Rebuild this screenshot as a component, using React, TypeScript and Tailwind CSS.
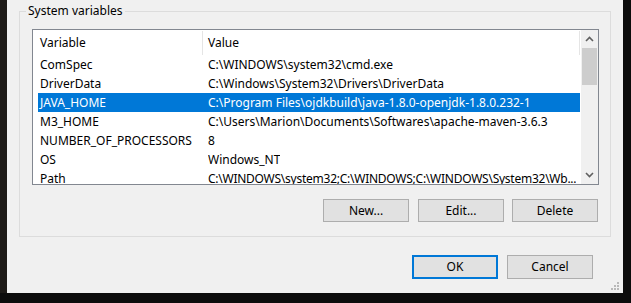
import React from "react";

const rows: [string, string][] = [
  ["ComSpec", "C:\\WINDOWS\\system32\\cmd.exe"],
  ["DriverData", "C:\\Windows\\System32\\Drivers\\DriverData"],
  ["JAVA_HOME", "C:\\Program Files\\ojdkbuild\\java-1.8.0-openjdk-1.8.0.232-1"],
  ["M3_HOME", "C:\\Users\\Marion\\Documents\\Softwares\\apache-maven-3.6.3"],
  ["NUMBER_OF_PROCESSORS", "8"],
  ["OS", "Windows_NT"],
  ["Path", "C:\\WINDOWS\\system32;C:\\WINDOWS;C:\\WINDOWS\\System32\\Wb..."],
];

function Btn({ label, primary, cls }: { label: string; primary?: boolean; cls?: string }) {
  return (
    <div
      className={
        "w-[86px] h-[23px] flex items-center justify-center bg-[#e1e1e1] text-[12px] text-black " +
        (primary ? "border-2 border-[#0078d7] " : "border border-[#adadad] ") +
        (cls ?? "")
      }
    >
      {label}
    </div>
  );
}

export default function App() {
  return (
    <div
      className="w-[631px] h-[303px] bg-[#0c0c0c] flex overflow-hidden"
      style={{ fontFamily: '"Segoe UI", "Noto Sans", sans-serif' }}
    >
      <div className="w-[7px] h-[293px] bg-[#1d1a17]" />
      <div className="w-[616px] h-[293px] bg-[#f0f0f0] flex flex-col relative">
        {/* group box */}
        <div className="mt-[11px] ml-[12px] w-[592px] h-[226px] border border-[#dcdcdc] relative flex flex-col">
          <span className="absolute left-[6px] top-[-9px] px-[2px] bg-[#f0f0f0] text-[12px] leading-[16px] text-black">
            System variables
          </span>
          <div className="mt-[17px] ml-[12px] w-[567px] h-[156px] border border-[#828790] bg-white flex overflow-hidden">
            <div className="w-[548px] flex flex-col overflow-hidden">
              <div className="h-[25px] flex shrink-0 text-[12px] text-black">
                <div className="w-[169px] shrink-0 pl-[7px] flex items-center">Variable</div>
                <div className="w-px shrink-0 mt-px h-[24px] bg-[#e5e5e5]" />
                <div className="w-[376px] shrink-0 pl-[5px] flex items-center">Value</div>
                <div className="w-px shrink-0 mt-px h-[24px] bg-[#e5e5e5]" />
              </div>
              {rows.map(([k, v]) => {
                const sel = k === "JAVA_HOME";
                const path = k === "Path";
                return (
                  <div
                    key={k}
                    className={
                      "ml-[5px] w-[542px] h-[19px] shrink-0 flex items-center text-[12px] whitespace-nowrap " +
                      (sel ? "bg-[#0078d7] text-white" : "text-black")
                    }
                  >
                    <div className="w-[170px] shrink-0 pl-[2px]">{k}</div>
                    <div className={"min-w-0 overflow-hidden " + (path ? "tracking-[-0.25px]" : "")}>{v}</div>
                  </div>
                );
              })}
            </div>
            {/* scrollbar */}
            <div className="w-[17px] shrink-0 bg-[#f0f0f0] flex flex-col">
              <div className="h-[18px] flex items-center justify-center">
                <svg width="9" height="6" viewBox="0 0 9 6">
                  <path d="M1 5 L4.5 1.5 L8 5" stroke="#606060" strokeWidth="1.6" fill="none" />
                </svg>
              </div>
              <div className="h-[37px] mx-px bg-[#cdcdcd]" />
              <div className="flex-1" />
              <div className="h-[18px] flex items-center justify-center">
                <svg width="9" height="6" viewBox="0 0 9 6">
                  <path d="M1 1 L4.5 4.5 L8 1" stroke="#606060" strokeWidth="1.6" fill="none" />
                </svg>
              </div>
            </div>
          </div>
          <div className="mt-[14px] ml-[303px] flex">
            <Btn label="New..." />
            <Btn label="Edit..." cls="ml-[9px]" />
            <Btn label="Delete" cls="ml-[8px]" />
          </div>
        </div>
        <div className="mt-[18px] ml-[405px] flex">
          <Btn label="OK" primary cls="h-[24px]" />
          <Btn label="Cancel" cls="ml-[9px] h-[24px]" />
        </div>
        <svg className="absolute right-[3px] bottom-[2px]" width="9" height="9" viewBox="0 0 9 9">
          <rect x="6" y="0" width="2" height="2" fill="#b8b8b8" />
          <rect x="3" y="3" width="2" height="2" fill="#b8b8b8" />
          <rect x="6" y="3" width="2" height="2" fill="#b8b8b8" />
          <rect x="0" y="6" width="2" height="2" fill="#b8b8b8" />
          <rect x="3" y="6" width="2" height="2" fill="#b8b8b8" />
          <rect x="6" y="6" width="2" height="2" fill="#b8b8b8" />
        </svg>
      </div>
    </div>
  );
}
